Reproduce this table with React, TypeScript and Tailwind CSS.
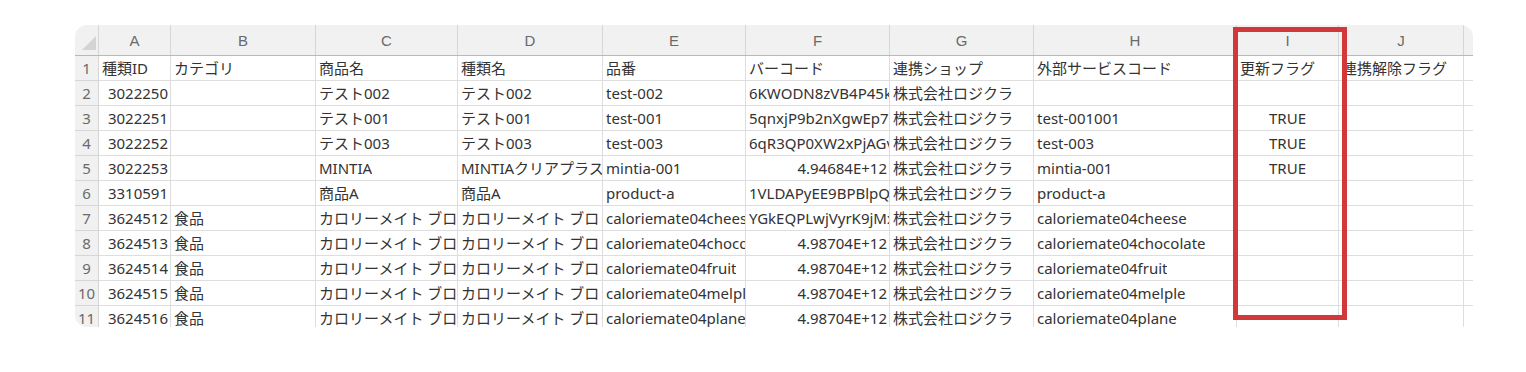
import type { ReactNode } from 'react'

type Align = 'l' | 'r' | 'c'
type Cell = string | { v: string; a: Align }

const columns = ['A', 'B', 'C', 'D', 'E', 'F', 'G', 'H', 'I', 'J']
const widths = ['w-[72px]', 'w-[145px]', 'w-[142px]', 'w-[145px]', 'w-[143px]', 'w-[144px]', 'w-[144px]', 'w-[203px]', 'w-[102px]', 'w-[125px]']

const r = (v: string): Cell => ({ v, a: 'r' })
const c = (v: string): Cell => ({ v, a: 'c' })

const calorie = 'カロリーメイト ブロック'
const shop = '株式会社ロジクラ'

const rows: Cell[][] = [
  ['種類ID', 'カテゴリ', '商品名', '種類名', '品番', 'バーコード', '連携ショップ', '外部サービスコード', '更新フラグ', '連携解除フラグ'],
  [r('3022250'), '', 'テスト002', 'テスト002', 'test-002', '6KWODN8zVB4P45kQx', shop, '', '', ''],
  [r('3022251'), '', 'テスト001', 'テスト001', 'test-001', '5qnxjP9b2nXgwEp7Lm', shop, 'test-001001', c('TRUE'), ''],
  [r('3022252'), '', 'テスト003', 'テスト003', 'test-003', '6qR3QP0XW2xPjAGvb', shop, 'test-003', c('TRUE'), ''],
  [r('3022253'), '', 'MINTIA', 'MINTIAクリアプラス', 'mintia-001', r('4.94684E+12'), shop, 'mintia-001', c('TRUE'), ''],
  [r('3310591'), '', '商品A', '商品A', 'product-a', '1VLDAPyEE9BPBlpQe', shop, 'product-a', '', ''],
  [r('3624512'), '食品', calorie, calorie, 'caloriemate04cheese', 'YGkEQPLwjVyrK9jMx', shop, 'caloriemate04cheese', '', ''],
  [r('3624513'), '食品', calorie, calorie, 'caloriemate04chocolate', r('4.98704E+12'), shop, 'caloriemate04chocolate', '', ''],
  [r('3624514'), '食品', calorie, calorie, 'caloriemate04fruit', r('4.98704E+12'), shop, 'caloriemate04fruit', '', ''],
  [r('3624515'), '食品', calorie, calorie, 'caloriemate04melple', r('4.98704E+12'), shop, 'caloriemate04melple', '', ''],
  [r('3624516'), '食品', calorie, calorie, 'caloriemate04plane', r('4.98704E+12'), shop, 'caloriemate04plane', '', ''],
]

function DataCell({ cell, width }: { cell: Cell; width: string }) {
  const v = typeof cell === 'string' ? cell : cell.v
  const a = typeof cell === 'string' ? 'l' : cell.a
  const align = a === 'r' ? 'justify-end pr-[2px]' : a === 'c' ? 'justify-center' : 'justify-start pl-[3px]'
  return (
    <div className={`${width} flex h-[25px] shrink-0 overflow-hidden whitespace-nowrap border-b border-r border-[#dedede] bg-white ${align}`}>
      <span className="block min-w-0 overflow-hidden leading-[24px]">{v}</span>
    </div>
  )
}

function RowHead({ children }: { children: ReactNode }) {
  return (
    <div className="flex h-[25px] w-[24px] shrink-0 items-center justify-center border-b border-r border-[#d6d6d6] bg-[#f1f1f1] text-[#6a6a6a]">
      {children}
    </div>
  )
}

export default function App() {
  return (
    <div className="min-h-screen bg-white pl-[75px] pt-[25px]">
      <div className="relative w-[1398px]">
        <div className="h-[302px] overflow-hidden rounded-[12px] bg-white font-['Noto_Sans','Noto_Sans_CJK_JP',sans-serif] text-[15px] leading-none text-[#333]">
          {/* column letters */}
          <div className="flex h-[31px] border-b border-[#b9b9b9] bg-[#f1f1f1] text-[#6a6a6a]">
            <div className="flex w-[24px] shrink-0 items-end justify-end border-r border-[#d6d6d6] pb-[5px] pr-[2px]">
              <svg width="14" height="14" viewBox="0 0 14 14">
                <path d="M14 0 L14 14 L0 14 Z" fill="#d4d4d4" />
              </svg>
            </div>
            {columns.map((col, i) => (
              <div key={col} className={`${widths[i]} flex shrink-0 items-center justify-center border-r border-[#d6d6d6] font-['Liberation_Sans',sans-serif]`}>
                {col}
              </div>
            ))}
            <div className="w-[9px] shrink-0" />
          </div>
          {rows.map((row, ri) => (
            <div key={ri} className="flex">
              <RowHead>{ri + 1}</RowHead>
              {row.map((cell, ci) => (
                <DataCell key={ci} cell={cell} width={widths[ci]} />
              ))}
              <div className="h-[25px] w-[9px] shrink-0 border-b border-[#dedede] bg-white" />
            </div>
          ))}
        </div>
        {/* highlight around column I */}
        <div className="absolute left-[1158px] top-[2px] h-[293px] w-[114px] border-[5px] border-[#d23838]" />
      </div>
    </div>
  )
}
